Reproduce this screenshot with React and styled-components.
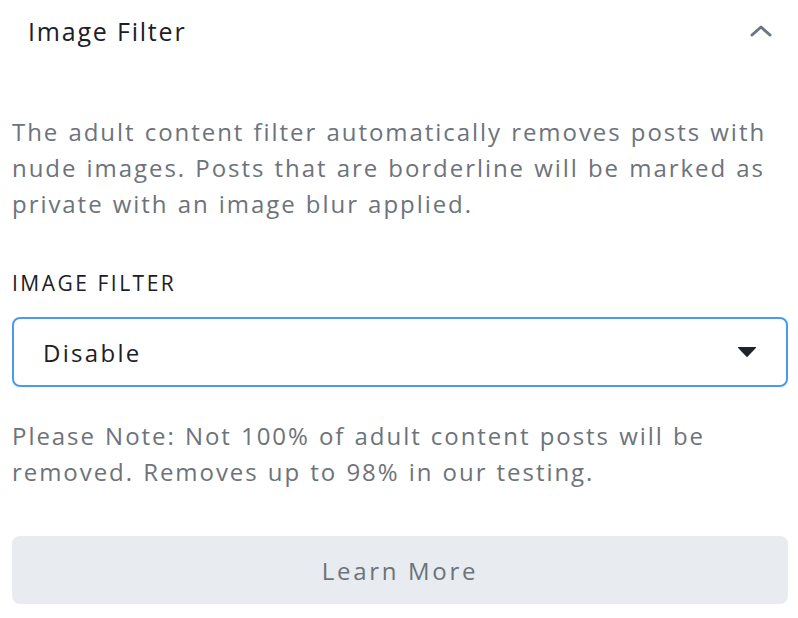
import React from 'react';
import styled, { createGlobalStyle } from 'styled-components';

const GlobalStyle = createGlobalStyle`
    body {
        margin: 0;
        background: #ffffff;
        font-family: "Open Sans", "Liberation Sans", sans-serif;
    }
`;

const Panel = styled.div`
    width: 798px;
    box-sizing: border-box;
    padding: 0 10px 0 12px;
`;

const Header = styled.div`
    display: flex;
    align-items: center;
    justify-content: space-between;
    height: 62px;
    padding: 0 16px;
`;

const Title = styled.h2`
    margin: 0;
    font-size: 25px;
    font-weight: 500;
    letter-spacing: 1.8px;
    color: #1c2026;
`;

const Paragraph = styled.p`
    margin: ${(p) => p.$top || 0}px 0 0;
    font-size: 24px;
    line-height: 36px;
    letter-spacing: 1.95px;
    word-spacing: 1px;
    color: #6d737a;
`;

const Label = styled.div`
    margin-top: 47px;
    font-size: 21px;
    line-height: 28px;
    font-weight: 500;
    letter-spacing: 2.5px;
    color: #1c2026;
`;

const Select = styled.div`
    margin-top: 20px;
    height: 70px;
    box-sizing: border-box;
    border: 2px solid #4a9af0;
    border-radius: 8px;
    display: flex;
    align-items: center;
    justify-content: space-between;
    padding: 0 29px 0 29px;
    font-size: 24px;
    letter-spacing: 2.3px;
    color: #1c2026;
`;

const Button = styled.button`
    display: block;
    width: 100%;
    margin-top: 46px;
    height: 68px;
    border: none;
    border-radius: 8px;
    background: #e8ebef;
    color: #6d737a;
    font-family: inherit;
    font-size: 24px;
    letter-spacing: 2.7px;
`;

const Chevron = () => (
    <svg width="22" height="14" viewBox="0 0 22 14">
        <path d="M2 11 L11 3 L20 11" fill="none" stroke="#6b7680" strokeWidth="3" strokeLinecap="round" strokeLinejoin="round" />
    </svg>
);

const Caret = () => (
    <svg width="20" height="12" viewBox="0 0 20 12">
        <path d="M1.5 1 H18.5 Q19.6 1 18.8 1.9 L10.8 10.6 Q10 11.4 9.2 10.6 L1.2 1.9 Q0.4 1 1.5 1 Z" fill="#1f242a" />
    </svg>
);

export default function App() {
    return (
        <Panel>
            <GlobalStyle />
            <Header>
                <Title>Image Filter</Title>
                <Chevron />
            </Header>
            <Paragraph $top={52}>
                The adult content filter automatically removes posts with nude images. Posts that are borderline will be marked as private with an image blur applied.
            </Paragraph>
            <Label>IMAGE FILTER</Label>
            <Select>
                <span>Disable</span>
                <Caret />
            </Select>
            <Paragraph $top={31}>
                Please Note: Not 100% of adult content posts will be removed. Removes up to 98% in our testing.
            </Paragraph>
            <Button>Learn More</Button>
        </Panel>
    );
}
